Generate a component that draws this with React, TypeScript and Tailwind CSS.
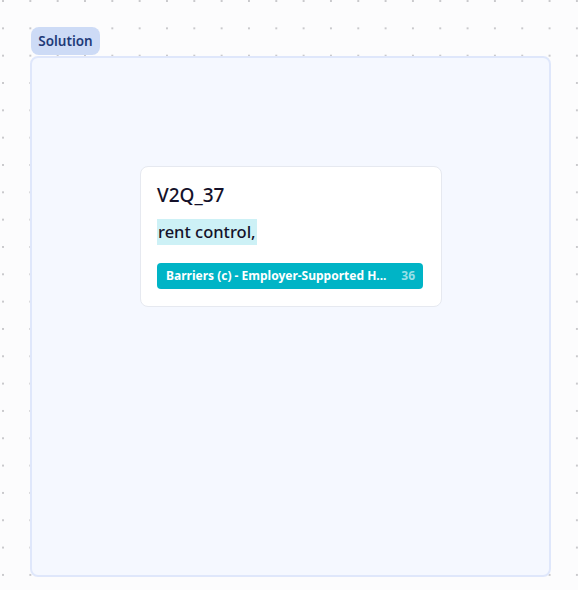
export default function App() {
  return (
    <div
      className="relative h-[590px] w-[578px] overflow-hidden bg-[#fcfcfd] bg-[radial-gradient(circle,#c9c9cc_0.8px,transparent_1.1px)] bg-[size:27.333px_27.333px] bg-[position:-10.67px_-12.67px]"
      style={{ fontFamily: '"Noto Sans", "Open Sans", sans-serif' }}
    >
      <div className="flex flex-col pl-[30px] pt-[27px]">
        <div className="ml-px flex h-[28px] w-[69px] items-center justify-center rounded-[8px] bg-[#cddbf6] text-[13.5px] font-semibold text-[#1e3a78]">
          Solution
        </div>
        <div className="mt-px flex h-[521px] w-[521px] flex-col rounded-[8px] border-2 border-[#dfe7fb] bg-[#f5f8ff] pl-[108px] pt-[108px]">
          <div className="flex h-[141px] w-[302px] flex-col rounded-[8px] border border-[#e6e9f0] bg-white px-[16px] pt-[14px]">
            <div className="text-[19px] font-medium leading-[28px] text-[#14112a]">V2Q_37</div>
            <div className="mt-[10px] flex">
              <span className="h-[26px] bg-[#cdf1f6] pl-px pr-[1px] text-[16.5px] font-medium leading-[26px] text-[#14112a]">rent control,</span>
            </div>
            <div className="mt-[18px] flex h-[26px] w-[266px] items-center justify-between rounded-[4px] bg-[#00b4c6] pl-[9px] pr-[8px] text-[12px] font-bold text-white">
              <span>Barriers (c) - Employer-Supported H...</span>
              <span className="text-white/60">36</span>
            </div>
          </div>
        </div>
      </div>
    </div>
  );
}
